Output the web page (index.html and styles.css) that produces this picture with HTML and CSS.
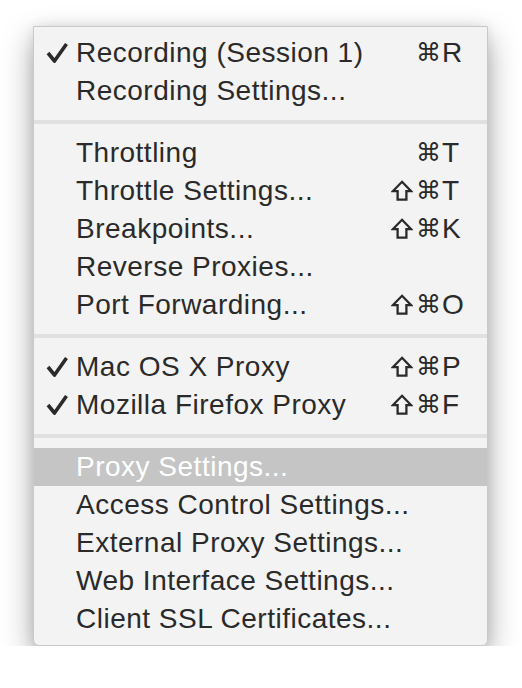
FILE: index.html
```html
<!DOCTYPE html>
<html>
<head>
<meta charset="utf-8">
<link rel="stylesheet" href="styles.css">
</head>
<body>
<div class="menu">
  <div class="item"><span class="check"><svg viewBox="0 0 22 21" width="22" height="21"><path d="M2 11 L8.5 19 L20.5 2" fill="none" stroke="#2a2a2a" stroke-width="3.6" stroke-linejoin="round"/></svg></span><span class="label">Recording (Session 1)</span><span class="shift"></span><span class="cmd">⌘</span><span class="key">R</span></div>
  <div class="item"><span class="check"></span><span class="label">Recording Settings...</span><span class="shift"></span><span class="cmd"></span><span class="key"></span></div>
  <div class="sep"></div>
  <div class="item"><span class="check"></span><span class="label">Throttling</span><span class="shift"></span><span class="cmd">⌘</span><span class="key">T</span></div>
  <div class="item"><span class="check"></span><span class="label">Throttle Settings...</span><span class="shift"><svg viewBox="0 0 22 21" width="22" height="21"><path d="M11 1.8 L20.2 11.2 H15.4 V19.6 H6.6 V11.2 H1.8 Z" fill="none" stroke="#2a2a2a" stroke-width="2.3" stroke-linejoin="miter"/></svg></span><span class="cmd">⌘</span><span class="key">T</span></div>
  <div class="item"><span class="check"></span><span class="label">Breakpoints...</span><span class="shift"><svg viewBox="0 0 22 21" width="22" height="21"><path d="M11 1.8 L20.2 11.2 H15.4 V19.6 H6.6 V11.2 H1.8 Z" fill="none" stroke="#2a2a2a" stroke-width="2.3" stroke-linejoin="miter"/></svg></span><span class="cmd">⌘</span><span class="key">K</span></div>
  <div class="item"><span class="check"></span><span class="label">Reverse Proxies...</span><span class="shift"></span><span class="cmd"></span><span class="key"></span></div>
  <div class="item"><span class="check"></span><span class="label">Port Forwarding...</span><span class="shift"><svg viewBox="0 0 22 21" width="22" height="21"><path d="M11 1.8 L20.2 11.2 H15.4 V19.6 H6.6 V11.2 H1.8 Z" fill="none" stroke="#2a2a2a" stroke-width="2.3" stroke-linejoin="miter"/></svg></span><span class="cmd">⌘</span><span class="key">O</span></div>
  <div class="sep"></div>
  <div class="item"><span class="check"><svg viewBox="0 0 22 21" width="22" height="21"><path d="M2 11 L8.5 19 L20.5 2" fill="none" stroke="#2a2a2a" stroke-width="3.6" stroke-linejoin="round"/></svg></span><span class="label">Mac OS X Proxy</span><span class="shift"><svg viewBox="0 0 22 21" width="22" height="21"><path d="M11 1.8 L20.2 11.2 H15.4 V19.6 H6.6 V11.2 H1.8 Z" fill="none" stroke="#2a2a2a" stroke-width="2.3" stroke-linejoin="miter"/></svg></span><span class="cmd">⌘</span><span class="key">P</span></div>
  <div class="item"><span class="check"><svg viewBox="0 0 22 21" width="22" height="21"><path d="M2 11 L8.5 19 L20.5 2" fill="none" stroke="#2a2a2a" stroke-width="3.6" stroke-linejoin="round"/></svg></span><span class="label">Mozilla Firefox Proxy</span><span class="shift"><svg viewBox="0 0 22 21" width="22" height="21"><path d="M11 1.8 L20.2 11.2 H15.4 V19.6 H6.6 V11.2 H1.8 Z" fill="none" stroke="#2a2a2a" stroke-width="2.3" stroke-linejoin="miter"/></svg></span><span class="cmd">⌘</span><span class="key">F</span></div>
  <div class="sep"></div>
  <div class="item selected"><span class="check"></span><span class="label">Proxy Settings...</span><span class="shift"></span><span class="cmd"></span><span class="key"></span></div>
  <div class="item"><span class="check"></span><span class="label">Access Control Settings...</span><span class="shift"></span><span class="cmd"></span><span class="key"></span></div>
  <div class="item"><span class="check"></span><span class="label">External Proxy Settings...</span><span class="shift"></span><span class="cmd"></span><span class="key"></span></div>
  <div class="item"><span class="check"></span><span class="label">Web Interface Settings...</span><span class="shift"></span><span class="cmd"></span><span class="key"></span></div>
  <div class="item"><span class="check"></span><span class="label">Client SSL Certificates...</span><span class="shift"></span><span class="cmd"></span><span class="key"></span></div>
</div>
</body>
</html>
```

FILE: styles.css
```css
html, body {
  margin: 0;
  padding: 0;
  background: #ffffff;
}
body {
  padding: 26px 0 0 33px;
  font-family: "Liberation Sans", Arial, sans-serif;
}
.menu {
  width: 453px;
  background: #f3f3f3;
  border: 1px solid #c9c9c9;
  border-radius: 0 0 6px 6px;
  padding: 7px 0;
  box-shadow: 0 12px 30px rgba(0, 0, 0, 0.36), 0 0 12px rgba(0, 0, 0, 0.08);
}
.item {
  display: grid;
  grid-template-columns: 42px 1fr 28px 25px 46px;
  height: 38px;
  line-height: 38px;
  font-size: 28px;
  letter-spacing: 0.5px;
  color: #2a2a2a;
}
.item.selected {
  background: #c5c5c5;
  color: #ffffff;
}
.check {
  display: flex;
  align-items: center;
  padding-left: 12px;
}
.check svg {
  display: block;
  margin-top: -1px;
}
.label {
  white-space: nowrap;
}
.shift {
  display: flex;
  align-items: center;
  justify-content: center;
}
.shift svg {
  display: block;
  margin-top: -1px;
}
.cmd {
  font-family: "DejaVu Sans", sans-serif;
  font-size: 25px;
  text-align: center;
  letter-spacing: 0;
}
.key {
  padding-left: 1px;
  letter-spacing: 0;
}
.sep {
  height: 24px;
  display: flex;
  align-items: center;
}
.sep::before {
  content: "";
  display: block;
  width: 100%;
  height: 4px;
  background: #e0e0e0;
}
```
